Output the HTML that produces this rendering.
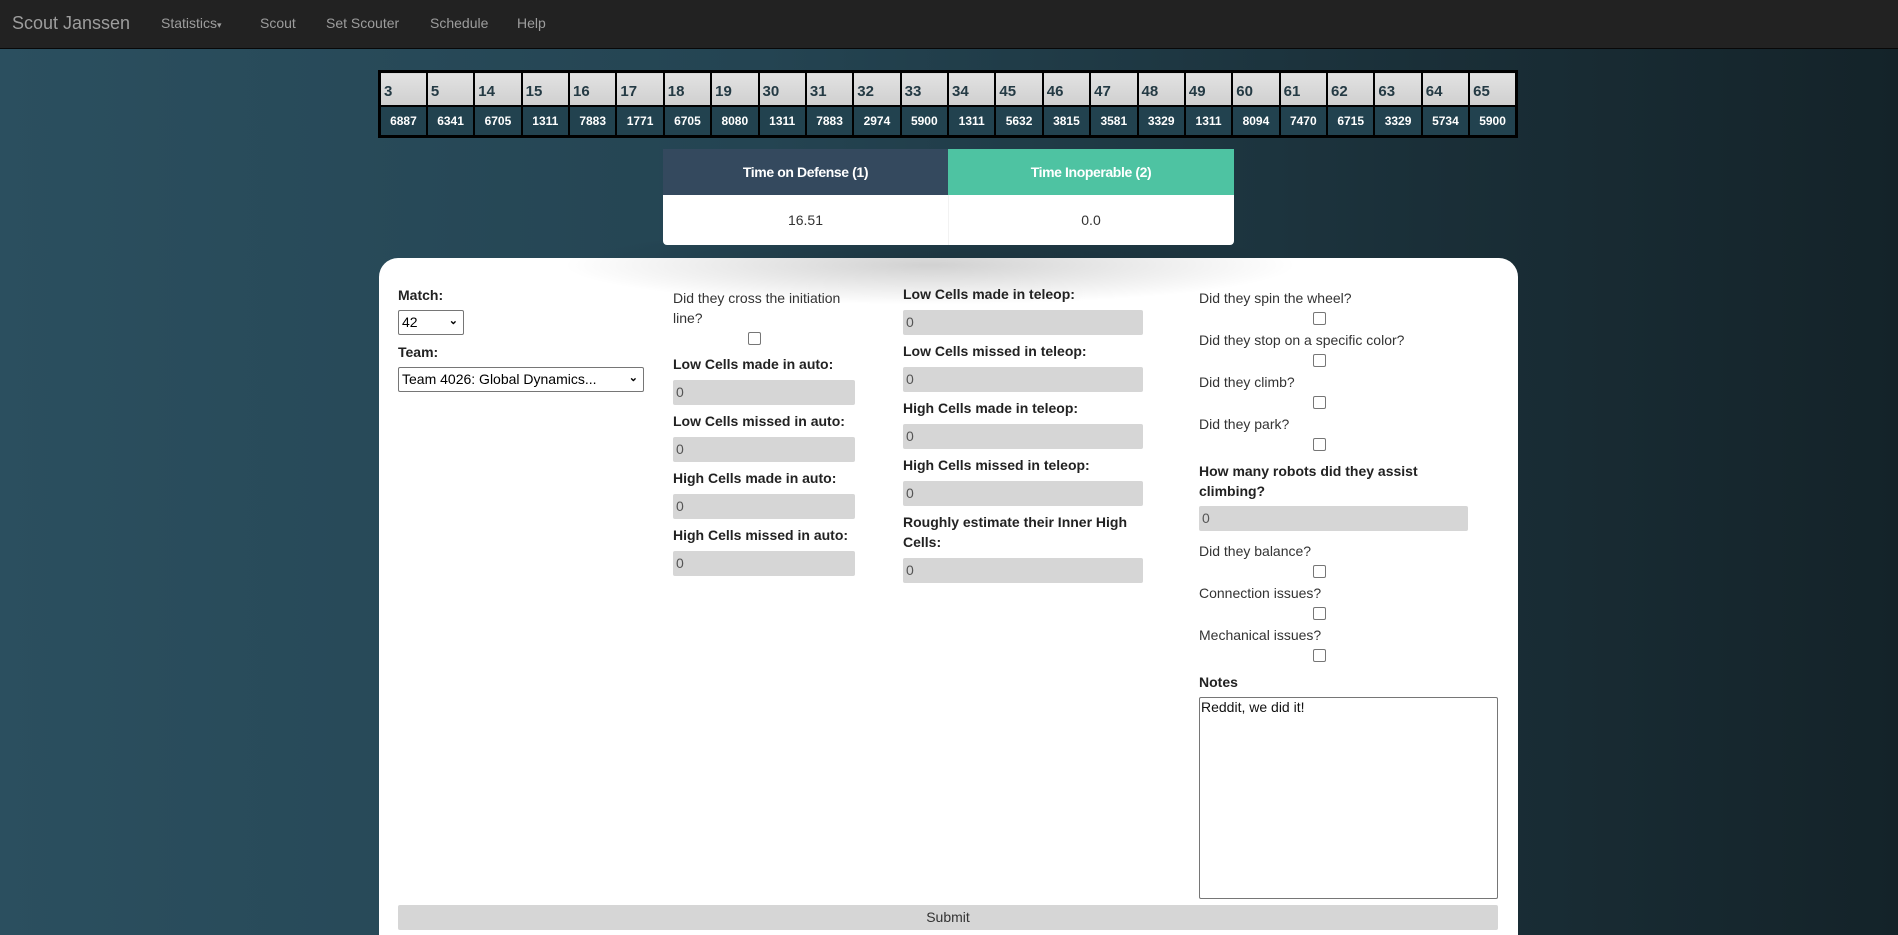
<!DOCTYPE html>
<html style="overflow:hidden;width:1898px;height:935px"><head><meta charset="utf-8"><style>
*{box-sizing:border-box;margin:0;padding:0}
body{width:1898px;height:935px;overflow:hidden;font-family:"Liberation Sans",Arial,sans-serif;background:linear-gradient(90deg,#2b4f5f 0%,#244452 40%,#1a2f38 75%,#142329 100%);position:relative;color:#222}
.nav{position:absolute;left:0;top:0;width:1898px;height:49px;background:#222;border-bottom:1px solid #080808}
.nav span{position:absolute;top:15px;color:#9d9d9d;font-size:14px}
.brand{font-size:18px!important;top:13px!important;left:12px}
table.t{position:absolute;left:378px;top:70px;width:1140px;height:68px;border-collapse:collapse;border:3px solid #000;table-layout:fixed}
table.t td{border:2px solid #000;padding:0 3px}
table.t tr.h td{background:linear-gradient(#e2e2e2,#cfcfcf);height:33px;font-weight:bold;font-size:15px;color:#243a44;padding-top:4px}
table.t tr.b td{background:#22424f;color:#fff;font-weight:bold;font-size:12px;text-align:center;height:29px}
.def{position:absolute;left:663px;top:149px;width:571px;height:96px;background:#fff;border-radius:0 0 4px 4px;overflow:hidden}
.def .a,.def .b{position:absolute;top:0;height:46px;width:285px;color:#fff;font-weight:bold;font-size:14px;text-align:center;line-height:46px;letter-spacing:-0.4px}
.def .a{left:0;background:#34495e}.def .b{left:285px;width:286px;background:#4ec3a2}
.def .v{position:absolute;top:46px;height:50px;line-height:50px;width:285px;text-align:center;font-size:14px;color:#333}
.card{position:absolute;left:379px;top:258px;width:1139px;height:677px;background:#fff;border-radius:19px 19px 0 0}
.shadow{position:absolute;left:560px;top:225px;width:740px;height:80px;background:radial-gradient(ellipse at center,rgba(0,0,0,.18),rgba(0,0,0,0) 70%)}
.l{position:absolute;font-size:14px;font-weight:bold;color:#222}
.r{position:absolute;font-size:14px;color:#333}
.in{position:absolute;height:25px;background:#d6d6d6;border-radius:2px;font-size:14px;color:#555;padding:4px 3px;line-height:17px}
.cb{position:absolute;width:13px;height:13px;border:1px solid #767676;border-radius:2px;background:#fff}
.sel{position:absolute;height:25px;border:1px solid #767676;border-radius:2px;background:#fff;font-size:14px;padding:3px 3px;color:#000}
.sel i{position:absolute;right:5px;top:3px;font-style:normal;font-size:11px;font-weight:bold}
</style></head><body>
<div class="nav"><span class="brand">Scout Janssen</span><span style="left:161px">Statistics<small style="font-size:9px">▾</small></span><span style="left:260px">Scout</span><span style="left:326px">Set Scouter</span><span style="left:430px">Schedule</span><span style="left:517px">Help</span></div>
<table class="t"><tr class="h"><td>3</td><td>5</td><td>14</td><td>15</td><td>16</td><td>17</td><td>18</td><td>19</td><td>30</td><td>31</td><td>32</td><td>33</td><td>34</td><td>45</td><td>46</td><td>47</td><td>48</td><td>49</td><td>60</td><td>61</td><td>62</td><td>63</td><td>64</td><td>65</td></tr>
<tr class="b"><td>6887</td><td>6341</td><td>6705</td><td>1311</td><td>7883</td><td>1771</td><td>6705</td><td>8080</td><td>1311</td><td>7883</td><td>2974</td><td>5900</td><td>1311</td><td>5632</td><td>3815</td><td>3581</td><td>3329</td><td>1311</td><td>8094</td><td>7470</td><td>6715</td><td>3329</td><td>5734</td><td>5900</td></tr></table>
<div class="card"></div>
<div class="shadow"></div>
<div class="def"><div class="a">Time on Defense (1)</div><div class="b">Time Inoperable (2)</div><div class="v" style="left:0">16.51</div><div class="v" style="left:285px;border-left:1px solid #f2f2f2">0.0</div></div>

<div class="l" style="left:398px;top:287px">Match:</div>
<div class="sel" style="left:398px;top:310px;width:66px">42<i>⌄</i></div>
<div class="l" style="left:398px;top:344px">Team:</div>
<div class="sel" style="left:398px;top:367px;width:246px">Team 4026: Global Dynamics...<i>⌄</i></div>

<div class="r" style="left:673px;top:290px">Did they cross the initiation</div>
<div class="r" style="left:673px;top:310px">line?</div>
<div class="cb" style="left:748px;top:332px"></div>
<div class="l" style="left:673px;top:356px">Low Cells made in auto:</div>
<div class="in" style="left:673px;top:380px;width:182px">0</div>
<div class="l" style="left:673px;top:413px">Low Cells missed in auto:</div>
<div class="in" style="left:673px;top:437px;width:182px">0</div>
<div class="l" style="left:673px;top:470px">High Cells made in auto:</div>
<div class="in" style="left:673px;top:494px;width:182px">0</div>
<div class="l" style="left:673px;top:527px">High Cells missed in auto:</div>
<div class="in" style="left:673px;top:551px;width:182px">0</div>

<div class="l" style="left:903px;top:286px">Low Cells made in teleop:</div>
<div class="in" style="left:903px;top:310px;width:240px">0</div>
<div class="l" style="left:903px;top:343px">Low Cells missed in teleop:</div>
<div class="in" style="left:903px;top:367px;width:240px">0</div>
<div class="l" style="left:903px;top:400px">High Cells made in teleop:</div>
<div class="in" style="left:903px;top:424px;width:240px">0</div>
<div class="l" style="left:903px;top:457px">High Cells missed in teleop:</div>
<div class="in" style="left:903px;top:481px;width:240px">0</div>
<div class="l" style="left:903px;top:514px">Roughly estimate their Inner High</div>
<div class="l" style="left:903px;top:534px">Cells:</div>
<div class="in" style="left:903px;top:558px;width:240px">0</div>

<div class="r" style="left:1199px;top:290px">Did they spin the wheel?</div>
<div class="cb" style="left:1313px;top:312px"></div>
<div class="r" style="left:1199px;top:332px">Did they stop on a specific color?</div>
<div class="cb" style="left:1313px;top:354px"></div>
<div class="r" style="left:1199px;top:374px">Did they climb?</div>
<div class="cb" style="left:1313px;top:396px"></div>
<div class="r" style="left:1199px;top:416px">Did they park?</div>
<div class="cb" style="left:1313px;top:438px"></div>
<div class="l" style="left:1199px;top:463px">How many robots did they assist</div>
<div class="l" style="left:1199px;top:483px">climbing?</div>
<div class="in" style="left:1199px;top:506px;width:269px">0</div>
<div class="r" style="left:1199px;top:543px">Did they balance?</div>
<div class="cb" style="left:1313px;top:565px"></div>
<div class="r" style="left:1199px;top:585px">Connection issues?</div>
<div class="cb" style="left:1313px;top:607px"></div>
<div class="r" style="left:1199px;top:627px">Mechanical issues?</div>
<div class="cb" style="left:1313px;top:649px"></div>
<div class="l" style="left:1199px;top:674px">Notes</div>
<div style="position:absolute;left:1199px;top:697px;width:299px;height:202px;border:1px solid #767676;border-radius:2px;font-size:14px;padding:1px 1px;color:#111">Reddit, we did it!</div>
<div style="position:absolute;left:398px;top:905px;width:1100px;height:25px;background:#d6d6d6;border-radius:2px;text-align:center;font-size:14px;line-height:25px;color:#333">Submit</div>
</body></html>
